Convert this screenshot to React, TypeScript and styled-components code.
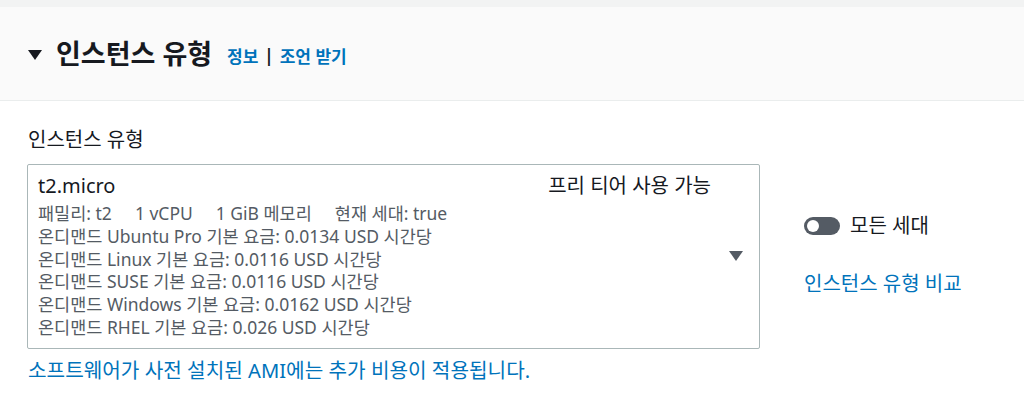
import React from "react";
import styled, { createGlobalStyle } from "styled-components";

const Global = createGlobalStyle`
  html, body { margin: 0; padding: 0; background: #ffffff; }
  body { font-family: "Noto Sans", "Noto Sans CJK KR", sans-serif; color: #16191f; }
`;

const TopBand = styled.div`
  height: 7px;
  background: #f2f3f3;
`;

const Header = styled.div`
  height: 94px;
  background: #fafafa;
  border-bottom: 1px solid #eaeded;
  display: flex;
  align-items: center;
  padding-left: 28px;
  box-sizing: border-box;
`;

const Caret = styled.svg`
  width: 14px;
  height: 10px;
  flex: none;
  margin-top: 2px;
`;

const Title = styled.h2`
  margin: 0 0 0 14px;
  font-size: 27px;
  font-weight: 700;
  color: #16191f;
  line-height: 34px;
`;

const HeaderLinks = styled.span`
  margin-left: 15px;
  font-size: 17px;
  font-weight: 700;
  color: #0073bb;
  display: flex;
  align-items: center;
  gap: 6px;
  margin-top: 4px;
`;

const Divider = styled.span`
  color: #16191f;
`;

const Body = styled.div`
  padding: 25px 28px 0 27px;
`;

const FieldLabel = styled.div`
  font-size: 20px;
  line-height: 28px;
  color: #16191f;
  padding-left: 1px;
  margin-bottom: 10px;
`;

const Row = styled.div`
  display: flex;
  align-items: stretch;
`;

const SelectBox = styled.div`
  width: 733px;
  box-sizing: border-box;
  border: 1px solid #aab7b8;
  border-radius: 2px;
  padding: 9px 16px 9px 10px;
  display: flex;
  align-items: center;
`;

const SelectContent = styled.div`
  flex: 1;
`;

const PrimaryRow = styled.div`
  display: flex;
  justify-content: space-between;
  font-size: 20px;
  line-height: 24px;
  color: #16191f;
  padding-right: 18px;
`;

const Details = styled.div`
  margin-top: 4px;
  font-size: 17.5px;
  line-height: 22.8px;
  color: #545b64;
`;

const Spec = styled.span`
  margin-right: 23px;
`;

const DropArrow = styled.svg`
  width: 14px;
  height: 10px;
  flex: none;
`;

const Side = styled.div`
  margin-left: 44px;
  display: flex;
  flex-direction: column;
  justify-content: center;
  gap: 32px;
  padding-bottom: 2px;
`;

const ToggleRow = styled.div`
  display: flex;
  align-items: center;
  gap: 10px;
  font-size: 20px;
  line-height: 26px;
  color: #16191f;
`;

const Toggle = styled.span`
  width: 36px;
  height: 18px;
  border-radius: 9px;
  background: #545b64;
  position: relative;
  flex: none;
  &::after {
    content: "";
    position: absolute;
    left: 3px;
    top: 3px;
    width: 12px;
    height: 12px;
    border-radius: 50%;
    background: #ffffff;
  }
`;

const Link = styled.a`
  color: #0073bb;
  font-size: 20px;
  text-decoration: none;
  line-height: 26px;
`;

const Footer = styled.div`
  margin-top: 8px;
  padding-left: 1px;
  font-size: 20.2px;
  line-height: 26px;
  color: #0073bb;
`;

const lines = [
  "온디맨드 Ubuntu Pro 기본 요금: 0.0134 USD 시간당",
  "온디맨드 Linux 기본 요금: 0.0116 USD 시간당",
  "온디맨드 SUSE 기본 요금: 0.0116 USD 시간당",
  "온디맨드 Windows 기본 요금: 0.0162 USD 시간당",
  "온디맨드 RHEL 기본 요금: 0.026 USD 시간당",
];

export default function App() {
  return (
    <>
      <Global />
      <TopBand />
      <Header>
        <Caret viewBox="0 0 14 10">
          <path d="M0 0 H14 L7 10 Z" fill="#16191f" />
        </Caret>
        <Title>인스턴스 유형</Title>
        <HeaderLinks>
          <span>정보</span>
          <Divider>|</Divider>
          <span>조언 받기</span>
        </HeaderLinks>
      </Header>
      <Body>
        <FieldLabel>인스턴스 유형</FieldLabel>
        <Row>
          <SelectBox>
            <SelectContent>
              <PrimaryRow>
                <span>t2.micro</span>
                <span>프리 티어 사용 가능</span>
              </PrimaryRow>
              <Details>
                <div>
                  <Spec>패밀리: t2</Spec>
                  <Spec>1 vCPU</Spec>
                  <Spec>1 GiB 메모리</Spec>
                  <span>현재 세대: true</span>
                </div>
                {lines.map((l) => (
                  <div key={l}>{l}</div>
                ))}
              </Details>
            </SelectContent>
            <DropArrow viewBox="0 0 14 10">
              <path d="M0 0 H14 L7 10 Z" fill="#545b64" />
            </DropArrow>
          </SelectBox>
          <Side>
            <ToggleRow>
              <Toggle />
              <span>모든 세대</span>
            </ToggleRow>
            <Link href="#">인스턴스 유형 비교</Link>
          </Side>
        </Row>
        <Footer>소프트웨어가 사전 설치된 AMI에는 추가 비용이 적용됩니다.</Footer>
      </Body>
    </>
  );
}
